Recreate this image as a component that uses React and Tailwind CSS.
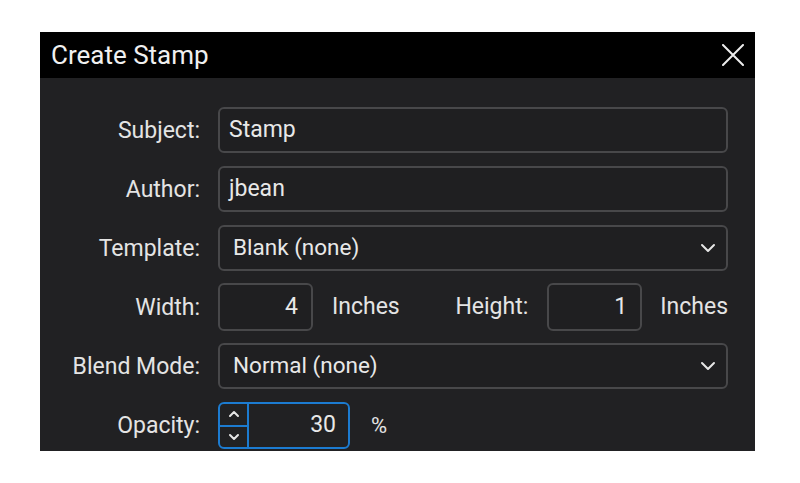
import React from "react";

const font = { fontFamily: "Roboto, 'Noto Sans', sans-serif" };

function Chevron() {
  return (
    <svg width="16" height="10" viewBox="0 0 16 10" fill="none">
      <polyline points="2,2 8,8 14,2" stroke="#e6e6e6" strokeWidth="2" strokeLinecap="round" strokeLinejoin="round" />
    </svg>
  );
}

function Label({ children }) {
  return (
    <div className="w-[160px] shrink-0 text-right text-[23px] text-[#e4e4e4] leading-none">{children}</div>
  );
}

function TextBox({ value }) {
  return (
    <div className="flex-1 h-[46px] border-2 border-[#48484a] rounded-[6px] bg-[#1f1f21] flex items-center pl-[9px] text-[23px] text-[#e8e8e8]">
      {value}
    </div>
  );
}

function SelectBox({ value }) {
  return (
    <div className="flex-1 h-[46px] border-2 border-[#48484a] rounded-[6px] bg-[#1f1f21] flex items-center justify-between pl-[13px] pr-[10px] text-[22.5px] text-[#e8e8e8]">
      <span>{value}</span>
      <Chevron />
    </div>
  );
}

function NumBox({ value }) {
  return (
    <div className="w-[95px] h-[48px] border-2 border-[#48484a] rounded-[6px] bg-[#1f1f21] flex items-center justify-end pr-[13px] text-[23px] text-[#e8e8e8]">
      {value}
    </div>
  );
}

export default function App() {
  return (
    <div className="w-[800px] h-[483px] bg-white pt-[32px] pl-[40px]" style={font}>
      <div className="w-[715px] h-[419px] bg-[#212123] flex flex-col">
        <div className="h-[46px] bg-black flex items-center justify-between pl-[11px] pr-[11px]">
          <span className="text-[26px] text-[#f0f0f0] leading-none">Create Stamp</span>
          <svg width="22" height="22" viewBox="0 0 22 22" fill="none">
            <path d="M1 1 L21 21 M21 1 L1 21" stroke="#ededed" strokeWidth="2" strokeLinecap="round" />
          </svg>
        </div>
        <div className="flex flex-col gap-[13px] pt-[29px] pr-[27px]">
          <div className="flex items-center gap-[18px]">
            <Label>Subject:</Label>
            <TextBox value="Stamp" />
          </div>
          <div className="flex items-center gap-[18px]">
            <Label>Author:</Label>
            <TextBox value="jbean" />
          </div>
          <div className="flex items-center gap-[18px]">
            <Label>Template:</Label>
            <SelectBox value="Blank (none)" />
          </div>
          <div className="flex items-center gap-[18px] h-[46px]">
            <Label>Width:</Label>
            <div className="flex-1 flex items-center text-[23px] text-[#e4e4e4]">
              <NumBox value="4" />
              <span className="ml-[19px]">Inches</span>
              <span className="ml-auto">Height:</span>
              <div className="ml-[19px]">
                <NumBox value="1" />
              </div>
              <span className="ml-[18px]">Inches</span>
            </div>
          </div>
          <div className="flex items-center gap-[18px]">
            <Label>Blend Mode:</Label>
            <SelectBox value="Normal (none)" />
          </div>
          <div className="flex items-center gap-[18px]">
            <Label>Opacity:</Label>
            <div className="flex items-center">
              <div className="w-[132px] h-[47px] border-2 border-[#1c7bd0] rounded-[6px] flex">
                <div className="w-[29px] border-r-2 border-[#1c7bd0] flex flex-col">
                  <div className="flex-1 flex items-center justify-center border-b-2 border-[#1c7bd0]">
                    <svg width="12" height="8" viewBox="0 0 12 8" fill="none">
                      <polyline points="2,6 6,2 10,6" stroke="#e6e6e6" strokeWidth="2" strokeLinecap="round" strokeLinejoin="round" />
                    </svg>
                  </div>
                  <div className="flex-1 flex items-center justify-center">
                    <svg width="12" height="8" viewBox="0 0 12 8" fill="none">
                      <polyline points="2,2 6,6 10,2" stroke="#e6e6e6" strokeWidth="2" strokeLinecap="round" strokeLinejoin="round" />
                    </svg>
                  </div>
                </div>
                <div className="flex-1 flex items-center justify-end pr-[12px] text-[23px] text-[#e8e8e8]">30</div>
              </div>
              <span className="ml-[21px] text-[22px] text-[#e4e4e4]">%</span>
            </div>
          </div>
        </div>
      </div>
    </div>
  );
}
